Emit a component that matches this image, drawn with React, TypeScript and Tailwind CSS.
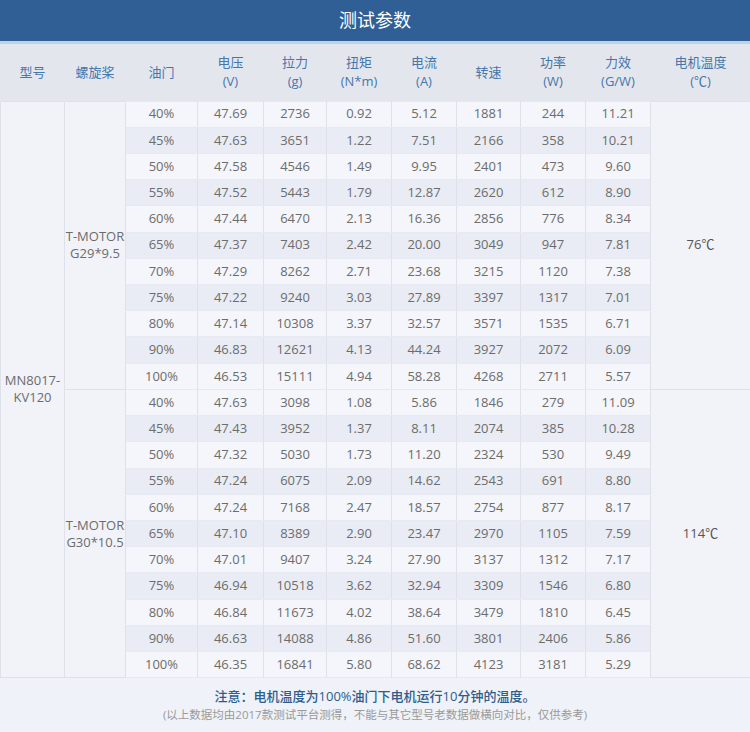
const font = {
  fontFamily: '"Open Sans", "Noto Sans CJK SC", sans-serif',
};

type Row = [string, string, string, string, string, string, string, string];

const g29: Row[] = [
  ["40%", "47.69", "2736", "0.92", "5.12", "1881", "244", "11.21"],
  ["45%", "47.63", "3651", "1.22", "7.51", "2166", "358", "10.21"],
  ["50%", "47.58", "4546", "1.49", "9.95", "2401", "473", "9.60"],
  ["55%", "47.52", "5443", "1.79", "12.87", "2620", "612", "8.90"],
  ["60%", "47.44", "6470", "2.13", "16.36", "2856", "776", "8.34"],
  ["65%", "47.37", "7403", "2.42", "20.00", "3049", "947", "7.81"],
  ["70%", "47.29", "8262", "2.71", "23.68", "3215", "1120", "7.38"],
  ["75%", "47.22", "9240", "3.03", "27.89", "3397", "1317", "7.01"],
  ["80%", "47.14", "10308", "3.37", "32.57", "3571", "1535", "6.71"],
  ["90%", "46.83", "12621", "4.13", "44.24", "3927", "2072", "6.09"],
  ["100%", "46.53", "15111", "4.94", "58.28", "4268", "2711", "5.57"],
];

const g30: Row[] = [
  ["40%", "47.63", "3098", "1.08", "5.86", "1846", "279", "11.09"],
  ["45%", "47.43", "3952", "1.37", "8.11", "2074", "385", "10.28"],
  ["50%", "47.32", "5030", "1.73", "11.20", "2324", "530", "9.49"],
  ["55%", "47.24", "6075", "2.09", "14.62", "2543", "691", "8.80"],
  ["60%", "47.24", "7168", "2.47", "18.57", "2754", "877", "8.17"],
  ["65%", "47.10", "8389", "2.90", "23.47", "2970", "1105", "7.59"],
  ["70%", "47.01", "9407", "3.24", "27.90", "3137", "1312", "7.17"],
  ["75%", "46.94", "10518", "3.62", "32.94", "3309", "1546", "6.80"],
  ["80%", "46.84", "11673", "4.02", "38.64", "3479", "1810", "6.45"],
  ["90%", "46.63", "14088", "4.86", "51.60", "3801", "2406", "5.86"],
  ["100%", "46.35", "16841", "5.80", "68.62", "4123", "3181", "5.29"],
];

const widths = [64, 61, 72, 66, 63, 65, 65, 64, 65, 65, 100];

const headers: [string, string?][] = [
  ["型号"],
  ["螺旋桨"],
  ["油门"],
  ["电压", "(V)"],
  ["拉力", "(g)"],
  ["扭矩", "(N*m)"],
  ["电流", "(A)"],
  ["转速"],
  ["功率", "(W)"],
  ["力效", "(G/W)"],
  ["电机温度", "(℃)"],
];

function Group({
  rows,
  prop,
  temp,
  first,
}: {
  rows: Row[];
  prop: [string, string];
  temp: string;
  first: boolean;
}) {
  return (
    <>
      {rows.map((r, i) => (
        <tr
          key={i}
          className={i % 2 === 0 ? "bg-[#f4f6fb]" : "bg-[#e9ecf4]"}
        >
          {first && i === 0 && (
            <td
              rowSpan={22}
              className="border border-[#dde2ea] bg-[#f1f3f9] text-center align-middle leading-[17px]"
            >
              MN8017-
              <br />
              KV120
            </td>
          )}
          {i === 0 && (
            <td
              rowSpan={rows.length}
              className="border border-[#dde2ea] bg-[#f1f3f9] text-center align-middle leading-[17px]"
            >
              {prop[0]}
              <br />
              {prop[1]}
            </td>
          )}
          {r.map((v, j) => (
            <td
              key={j}
              className="h-[26.23px] border-x border-y border-x-[#dde2ea] border-y-[#e6e9f0] p-0 text-center"
            >
              {v}
            </td>
          ))}
          {i === 0 && (
            <td
              rowSpan={rows.length}
              className="border border-[#dde2ea] bg-[#f1f3f9] text-center align-middle text-[#555]"
            >
              {temp}
            </td>
          )}
        </tr>
      ))}
    </>
  );
}

export default function App() {
  return (
    <div className="w-[750px] bg-[#f3f5fa] text-[13px] text-[#6c6c6c]" style={font}>
      <div className="flex h-[41px] items-center justify-center bg-[#2f5f95] text-[18px] text-white">
        测试参数
      </div>
      <div className="h-[3px] bg-[#bcd3ea]" />
      <table className="w-[750px] table-fixed border-collapse">
        <colgroup>
          {widths.map((w, i) => (
            <col key={i} style={{ width: w }} />
          ))}
        </colgroup>
        <thead>
          <tr className="h-[57px] bg-[#e3e7ed]">
            {headers.map(([a, b], i) => (
              <th
                key={i}
                className="border-x border-[#e3e7ed] p-0 text-center font-normal leading-[19px] text-[#4676ac]"
              >
                {a}
                {b && (
                  <>
                    <br />
                    {b}
                  </>
                )}
              </th>
            ))}
          </tr>
        </thead>
        <tbody>
          <Group rows={g29} prop={["T-MOTOR", "G29*9.5"]} temp="76℃" first />
          <Group rows={g30} prop={["T-MOTOR", "G30*10.5"]} temp="114℃" first={false} />
        </tbody>
      </table>
      <div className="flex h-[54px] flex-col items-center justify-center bg-[#eff2f8]">
        <div className="text-[13px] font-medium leading-[19px] text-[#2e5c8c]">
          注意：电机温度为100%油门下电机运行10分钟的温度。
        </div>
        <div className="text-[11.5px] leading-[18px] text-[#9a9a9a]">
          (以上数据均由2017款测试平台测得，不能与其它型号老数据做横向对比，仅供参考)
        </div>
      </div>
    </div>
  );
}
